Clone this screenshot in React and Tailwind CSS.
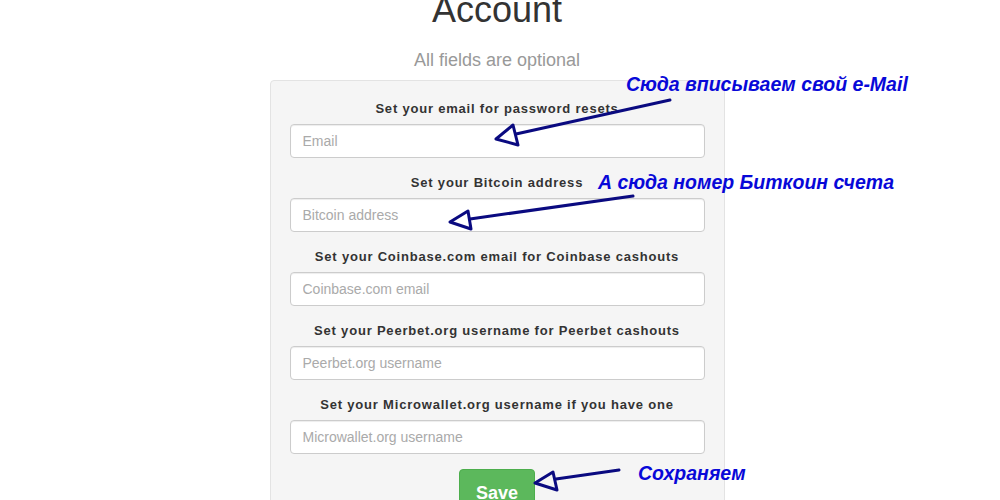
import React from 'react';

const fields = [
  { label: 'Set your email for password resets', placeholder: 'Email' },
  { label: 'Set your Bitcoin address', placeholder: 'Bitcoin address' },
  { label: 'Set your Coinbase.com email for Coinbase cashouts', placeholder: 'Coinbase.com email' },
  { label: 'Set your Peerbet.org username for Peerbet cashouts', placeholder: 'Peerbet.org username' },
  { label: 'Set your Microwallet.org username if you have one', placeholder: 'Microwallet.org username' },
];

function Annotations() {
  return (
    <>
      <svg className="absolute inset-0 pointer-events-none" width="1000" height="500" viewBox="0 0 1000 500">
        <g stroke="#0a0a80" strokeWidth="3" fill="none" strokeLinejoin="round" strokeLinecap="round">
          <line x1="670" y1="100" x2="516" y2="134" />
          <polygon points="496,139 513,125 518,145" />
          <line x1="633" y1="196" x2="470" y2="219" />
          <polygon points="450,222 468,211 471,229" />
          <line x1="619" y1="470" x2="556" y2="479" />
          <polygon points="535,483 553,472 557,490" />
        </g>
      </svg>
      <div className="absolute left-[626px] top-[70px] text-[19.5px] font-bold italic text-[#0808d8] whitespace-nowrap">
        Сюда вписываем свой e-Mail
      </div>
      <div className="absolute left-[598px] top-[168px] text-[19.5px] font-bold italic text-[#0808d8] whitespace-nowrap">
        А сюда номер Биткоин счета
      </div>
      <div className="absolute left-[638px] top-[459px] text-[19.5px] font-bold italic text-[#0808d8] whitespace-nowrap">
        Сохраняем
      </div>
    </>
  );
}

export default function App() {
  return (
    <div className="relative w-[1000px] h-[500px] overflow-hidden bg-white font-['Liberation_Sans',Arial,sans-serif]">
      <div className="w-[994px] flex flex-col items-center">
        <h1 className="mt-[-10px] text-[36px] leading-[1.1] text-[#333]">Account</h1>
        <p className="mt-[20px] text-[18px] leading-[20px] text-[#999]">All fields are optional</p>
        <div className="mt-[10px] w-[455px] bg-[#f5f5f5] border border-[#e3e3e3] rounded px-[19px] pt-[18px] pb-[20px]">
          {fields.map((f) => (
            <div key={f.label} className="mb-[15px]">
              <label className="block text-center text-[13px] leading-[20px] font-bold tracking-[0.8px] text-[#333] mb-[5px]">
                {f.label}
              </label>
              <input
                type="text"
                placeholder={f.placeholder}
                className="block w-full h-[34px] px-3 bg-white border border-[#ccc] rounded text-[14px] text-[#555] placeholder:text-[#aaa] shadow-[inset_0_1px_1px_rgba(0,0,0,0.075)]"
              />
            </div>
          ))}
          <div className="flex justify-center">
            <button className="h-[48px] pt-[2px] px-4 bg-[#5cb85c] border border-[#4cae4c] rounded text-white text-[18px] font-bold">
              Save
            </button>
          </div>
        </div>
      </div>
      <Annotations />
    </div>
  );
}
